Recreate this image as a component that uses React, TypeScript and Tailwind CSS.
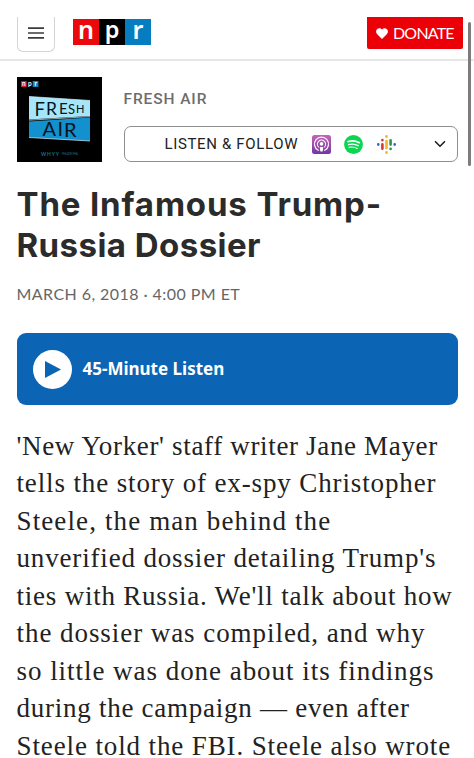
import { ChevronDown } from "lucide-react";

const TEASER = [
  { text: "'New Yorker' staff writer Jane Mayer", spacing: "tracking-[0.66px]" },
  { text: "tells the story of ex-spy Christopher", spacing: "tracking-[0.87px]" },
  { text: "Steele, the man behind the", spacing: "tracking-[1.12px]" },
  { text: "unverified dossier detailing Trump's", spacing: "tracking-[0.84px]" },
  { text: "ties with Russia. We'll talk about how", spacing: "tracking-[0.78px]" },
  { text: "the dossier was compiled, and why", spacing: "tracking-[0.94px]" },
  { text: "so little was done about its findings", spacing: "tracking-[0.96px]" },
  { text: "during the campaign — even after", spacing: "tracking-[0.74px]" },
  { text: "Steele told the FBI. Steele also wrote", spacing: "tracking-[0.88px]" },
];

function NprLogo() {
  return (
    <svg width="78" height="42" viewBox="0 -8 78 42" className="-my-2" aria-label="NPR">
      <rect width="26" height="26" fill="#ea0a0e" />
      <rect x="26" width="26" height="26" fill="#000" />
      <rect x="52" width="26" height="26" fill="#067dc0" />
      <g
        fill="#fff"
        fontFamily="'Noto Sans', sans-serif"
        fontWeight="600"
        fontSize="25"
        textAnchor="middle"
      >
        <text x="13" y="19.8">n</text>
        <text x="39" y="19.2" fontSize="23.5">p</text>
        <text x="65" y="19.8">r</text>
      </g>
    </svg>
  );
}

function CoverArt() {
  return (
    <svg
      width="85"
      height="85"
      viewBox="0 0 85 85"
      className="shrink-0"
      fontFamily="Lato, sans-serif"
    >
      <rect width="85" height="85" fill="#000" />
      <rect x="4" y="4" width="5.7" height="6" fill="#d5152c" />
      <rect x="15.7" y="4" width="5.7" height="6" fill="#1583bd" />
      <g fill="#fff" fontSize="6.5" fontWeight="700" textAnchor="middle">
        <text x="6.9" y="8.8">n</text>
        <text x="12.8" y="8.8">p</text>
        <text x="18.6" y="8.8">r</text>
      </g>
      <path d="M12 19.5 73 23.5V39L12 42.5Z" fill="#a5e6fa" />
      <path d="M12 44.5 73 40.5V64L12 60.5Z" fill="#1390ce" />
      <path
        d="M12 19.5 73 23.5M12 43.2 73 39.6M12 60.5 73 64"
        stroke="#d8edf3"
        strokeWidth="0.7"
      />
      <g fill="#06141c">
        <text x="17.5" y="38.8" fontSize="18.5">F</text>
        <text x="29" y="38.2" fontSize="17.5">R</text>
        <text x="42" y="37.4" fontSize="15">E</text>
        <text x="51" y="36.6" fontSize="13">S</text>
        <text x="59" y="36" fontSize="11">H</text>
        <text x="25.5" y="59" fontSize="20">A</text>
        <text x="40.5" y="59.4" fontSize="20">I</text>
        <text x="47" y="59.8" fontSize="20">R</text>
      </g>
      <text x="24" y="79" fontSize="5" fontWeight="700" fill="#136f9f" textLength="18">
        WHYY
      </text>
      <text x="45" y="78.3" fontSize="3" fill="#17607f" textLength="16">
        PHILADELPHIA
      </text>
    </svg>
  );
}

function PodcastsIcon() {
  return (
    <svg width="19" height="19" viewBox="0 0 19 19" fill="none">
      <defs>
        <linearGradient id="podcasts" x2="0" y2="1">
          <stop stopColor="#c565b5" />
          <stop offset="1" stopColor="#7336a4" />
        </linearGradient>
      </defs>
      <rect width="19" height="19" rx="2.5" fill="url(#podcasts)" />
      <g stroke="#fff" strokeLinecap="round">
        <path d="M6.3 15.3A7 7 0 1 1 12.7 15.3" strokeWidth="1.2" />
        <path d="M6.5 12A4.1 4.1 0 1 1 12.5 12" strokeWidth="1.1" />
      </g>
      <circle cx="9.5" cy="8.9" r="1.8" fill="#fff" />
      <path d="M7.7 11.9h3.6l-.6 4.3q-1.2.8-2.4 0Z" fill="#fff" />
    </svg>
  );
}

function SpotifyIcon() {
  return (
    <svg width="19" height="19" viewBox="0 0 19 19" fill="none">
      <circle cx="9.5" cy="9.5" r="9.4" fill="#0bd652" />
      <g stroke="#fff" strokeLinecap="round">
        <path d="M4 6.6q6-1.8 11.3 1.1" strokeWidth="1.7" />
        <path d="M4.5 9.6q5-1.4 9.8 1.1" strokeWidth="1.4" />
        <path d="M5 12.3q4.3-1.1 8.2 1.1" strokeWidth="1.1" />
      </g>
    </svg>
  );
}

function GooglePodcastsIcon() {
  return (
    <svg
      width="19"
      height="19"
      viewBox="0 0 19 19"
      fill="none"
      strokeWidth="2.6"
      strokeLinecap="round"
    >
      <path d="M1.3 9.4v.2M17.7 9.4v.2" stroke="#2867cf" />
      <path d="M5.4 5.1v.2M5.4 9.4v4.3" stroke="#d93636" />
      <path d="M9.5 1.3v.5M9.5 6v7M9.5 17.2v.5" stroke="#f5b42d" />
      <path d="M13.6 5.3v4.3M13.6 13.7v.2" stroke="#299745" />
    </svg>
  );
}

export default function App() {
  return (
    <div className="relative h-[758px] w-full overflow-hidden bg-white font-['Roboto',sans-serif]">
      <header className="flex h-[61px] items-start border-b-2 border-[#e6e6e6] pt-[17px] pr-[11px] pl-[16.5px]">
        <button className="flex h-[35px] w-[38px] items-center justify-center rounded-b-md border-x border-b border-[#d4d4d4] pb-[3px]">
          <svg width="16" height="12" viewBox="0 0 16 12" stroke="#3d3b3f" strokeWidth="1.7">
            <path d="M0 1.2h16M0 6h16M0 10.8h16" />
          </svg>
        </button>
        <div className="mt-[2px] ml-[18px]">
          <NprLogo />
        </div>
        <button className="ml-auto flex h-8 w-24 items-center rounded-b-[2px] bg-[#eb0008] pl-[9px] font-['Lato',sans-serif] text-[16px] text-white">
          <svg width="12" height="11" viewBox="0 0 12 11" fill="#fff" className="mr-[5px]">
            <path d="M6 11 1 6C-2 2 3-2 6 1.5 9-2 14 2 11 6Z" />
          </svg>
          <span className="-tracking-[0.8px]">DONATE</span>
        </button>
      </header>

      <main className="px-[16.5px]">
        <div className="flex pt-4">
          <CoverArt />
          <div className="ml-[22px] flex-1">
            <p className="mt-[12px] h-5 text-[15.5px] leading-5 font-medium tracking-[0.9px] text-[#6d6d6d]">
              FRESH AIR
            </p>
            <button className="mt-[17px] flex h-[36px] w-full items-center rounded-[7px] border border-[#8e8e8e] pl-10 text-[#222]">
              <span className="w-[147px] text-left text-[15px] tracking-[0.65px] whitespace-nowrap">
                LISTEN &amp; FOLLOW
              </span>
              <span className="flex gap-[13.5px]">
                <PodcastsIcon />
                <SpotifyIcon />
                <GooglePodcastsIcon />
              </span>
              <ChevronDown size={18} strokeWidth={2.2} className="mr-2 ml-auto" />
            </button>
          </div>
        </div>

        <h1 className="mt-[22px] font-['Inter',sans-serif] text-[33px] leading-[41px] font-bold whitespace-nowrap text-[#2b2b2b]">
          <span className="block tracking-[0.86px]">The Infamous Trump-</span>
          <span className="block tracking-[0.45px]">Russia Dossier</span>
        </h1>
        <p className="mt-[17.5px] font-['Lato',sans-serif] text-[16px] leading-5 tracking-[0.44px] text-[#666]">
          MARCH 6, 2018 · 4:00 PM ET
        </p>

        <button className="mt-[29.5px] flex h-[72px] w-full items-center rounded-[9px] bg-[#0b65b4] pl-4 text-white">
          <span className="flex size-[39px] items-center justify-center rounded-full bg-white">
            <svg width="16" height="17" viewBox="0 0 16 17" className="ml-[2px]">
              <path d="M0 0 16 8.5 0 17Z" fill="#0b65b4" />
            </svg>
          </span>
          <span className="ml-[11px] pb-px font-['Noto_Sans',sans-serif] text-[17px] font-bold">
            45-Minute Listen
          </span>
        </button>

        <p className="mt-[22.5px] font-['Liberation_Serif',serif] text-[27px] leading-[37.5px] whitespace-nowrap text-[#222]">
          {TEASER.map(({ text, spacing }) => (
            <span key={text} className={`block ${spacing}`}>
              {text}
            </span>
          ))}
        </p>
      </main>

      {/* Scroll thumb */}
      <div className="absolute top-[22px] right-[3px] h-[144px] w-[3px] rounded-full bg-[#7c7c7c]" />
    </div>
  );
}
